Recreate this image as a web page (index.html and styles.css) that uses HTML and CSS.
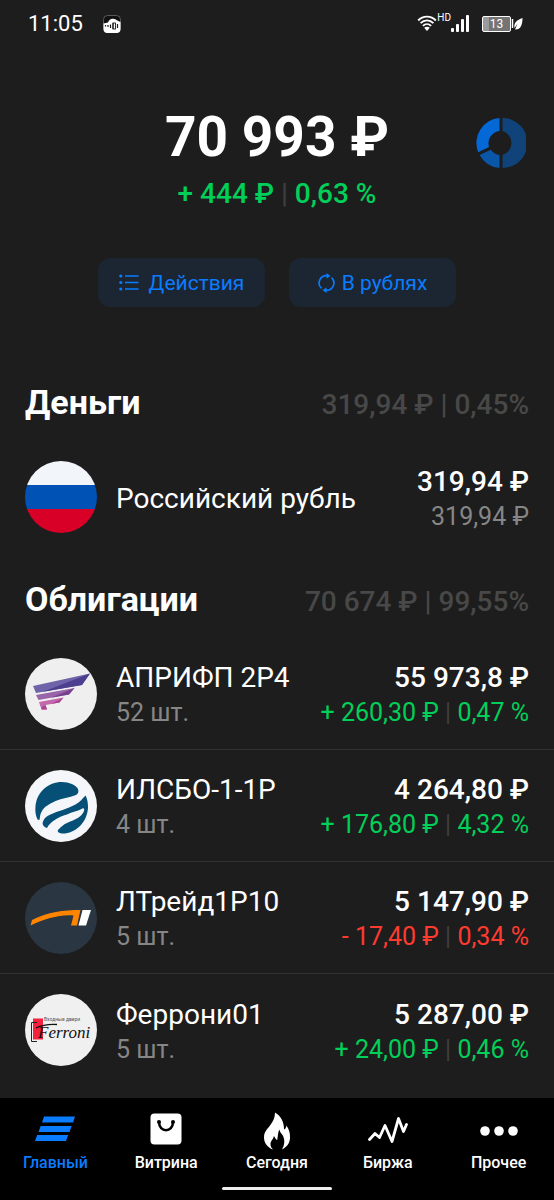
FILE: index.html
```html
<!DOCTYPE html>
<html lang="ru">
<head>
  <meta charset="UTF-8" />
  <meta name="viewport" content="width=device-width, initial-scale=1.0"/>
  <title>Портфель</title>
  <link rel="stylesheet" href="styles.css">
</head>
<body>
  <div class="status-bar">
    <span class="time">11:05</span>
    <svg class="icon-app" width="18" height="18" viewBox="0 0 18 18">
      <rect x="0.5" y="0.5" width="17" height="17" rx="4" fill="#111" stroke="#777" stroke-width="0.7"/>
      <path d="M0.5 8.5L5 7.5C6 4 9 3 11 4C13 4 14 6 17.5 7V14a4 4 0 0 1-4 4H4.500a4 4 0 0 1-4-4z" fill="#fff"/>
      <path d="M2.500 10v1.500M5 10v2M7.500 9.500v3.500M10 8v6M14.500 9v4" stroke="#1d1d1d" stroke-width="1.200"/>
      <rect x="10" y="8" width="2.500" height="6" fill="none" stroke="#1d1d1d" stroke-width="0.900"/>
    </svg>
    <div class="status-right">
      <svg width="20" height="17" viewBox="0 0 20 17">
        <g fill="none" stroke="#fff" stroke-width="1.900">
          <path d="M1.200 5.500C6 0.300 14 0.300 18.800 5.500"/>
          <path d="M3.600 8.200C7.200 4.400 12.800 4.400 16.400 8.200"/>
          <path d="M5.900 10.900C8.300 8.500 11.700 8.500 14.100 10.900"/>
        </g>
        <path d="M7.200 12.800C8.800 11.300 11.200 11.300 12.800 12.800L10 16z" fill="#fff"/>
      </svg>
      <span class="hd">HD</span>
      <svg width="19" height="17" viewBox="0 0 19 17" fill="#fff">
        <rect x="0" y="13" width="3" height="4" rx="1"/>
        <rect x="5" y="9" width="3" height="8" rx="1"/>
        <rect x="10" y="4" width="3" height="13" rx="1"/>
        <rect x="15" y="0" width="3" height="17" rx="1"/>
      </svg>
      <div class="battery">13</div>
      <svg width="12" height="14" viewBox="0 0 12 14">
        <path d="M1.500 2v9" stroke="#fff" stroke-width="1.500"/>
        <path d="M11.500 1C6 3 2.500 5.500 3.500 11L6.500 6.500L4 12.500C9.500 13 11.500 8 11.500 1z" fill="#fff"/>
      </svg>
    </div>
  </div>

  <main>
    <section class="summary">
      <div class="balance-row">
        <h1 class="balance">70 993 ₽</h1>
        <button class="chart-btn" aria-label="Аналитика">
          <svg width="50" height="50" viewBox="0 0 50 50">
            <path d="M26.500 0A25 25 0 0 1 26.500 50V37A12.500 12.500 0 0 0 26.500 13z" fill="#0f4379"/>
            <path d="M23.500 0A25 25 0 0 0 2.200 34.200L13 29A12.500 12.500 0 0 1 23.500 13z" fill="#0468d7"/>
            <path d="M3.600 37A25 25 0 0 0 23.500 50V37A12.500 12.500 0 0 1 14.800 31.800z" fill="#0a56a8"/>
          </svg>
        </button>
      </div>
      <div class="profit up">+ 444 ₽ <span class="sep">|</span> 0,63 %</div>
      <div class="actions">
        <button class="action">
          <svg width="20" height="17" viewBox="0 0 20 17">
            <path d="M6 2h13.500M6 8.500h13.500M6 15h13.500" stroke="#0a7cff" stroke-width="1.500"/>
            <circle cx="1.800" cy="2" r="1.600" fill="#0a7cff"/>
            <circle cx="1.800" cy="8.500" r="1.600" fill="#0a7cff"/>
            <circle cx="1.800" cy="15" r="1.600" fill="#0a7cff"/>
          </svg>
          Действия
        </button>
        <button class="action currency">
          <svg width="17" height="20" viewBox="0 0 17 20">
            <g fill="none" stroke="#0a7cff" stroke-width="1.600">
              <path d="M3.500 15.300A7.300 7.300 0 0 1 9.500 2.700"/>
              <path d="M13.500 4.700A7.300 7.300 0 0 1 7.500 17.300"/>
            </g>
            <path d="M8.500 0L12.500 3L8.500 5.500zM8.500 20L4.500 17L8.500 14.500z" fill="#0a7cff"/>
          </svg>
          В рублях
        </button>
      </div>
    </section>

    <section class="group">
      <div class="group-head">
        <h2>Деньги</h2>
        <span class="group-total">319,94 ₽ | 0,45%</span>
      </div>
      <div class="row">
        <svg class="logo" viewBox="0 0 72 72">
          <clipPath id="flag"><circle cx="36" cy="36" r="36"/></clipPath>
          <g clip-path="url(#flag)">
            <rect width="72" height="24" fill="#f2f5f9"/>
            <rect y="24" width="72" height="24" fill="#0052b4"/>
            <rect y="48" width="72" height="24" fill="#d80027"/>
          </g>
        </svg>
        <div class="info">
          <div class="name">Российский рубль</div>
        </div>
        <div class="value">
          <div class="price">319,94 ₽</div>
          <div class="sub">319,94 ₽</div>
        </div>
      </div>
    </section>

    <section class="group">
      <div class="group-head">
        <h2>Облигации</h2>
        <span class="group-total">70 674 ₽ | 99,55%</span>
      </div>
      <div class="row">
        <svg class="logo" viewBox="0 0 72 72">
          <circle cx="36" cy="36" r="36" fill="#efefef"/>
          <path d="M8 28L65 15.500L57 27L11 35z" fill="#6f63aa"/>
          <path d="M65 15.500L29 29.500L17 34L57 27z" fill="#4c3f8f"/>
          <path d="M11 37L49.500 30L44 36.500L13.500 42z" fill="#9a64a9"/>
          <path d="M49.500 30L26 39.800L44 36.500z" fill="#76408e"/>
          <path d="M14 44L38.500 39.500L34.500 44.500L20.500 47L22 51.500H16.500z" fill="#c368ab"/>
          <path d="M38.500 39.500L26 46L34.500 44.500zM20.500 47L17 49L16.500 51.500H22z" fill="#a94691"/>
        </svg>
        <div class="info">
          <div class="name">АПРИФП 2Р4</div>
          <div class="sub">52 шт.</div>
        </div>
        <div class="value">
          <div class="price">55 973,8 ₽</div>
          <div class="sub up">+ 260,30 ₽ <span class="sep">|</span> 0,47 %</div>
        </div>
      </div>
      <div class="row">
        <svg class="logo" viewBox="0 0 72 72">
          <circle cx="36" cy="36" r="36" fill="#f4f6f9"/>
          <path d="M12.500 49.500C10.500 45 10 41 10.500 36C12 22 23 12 37 12C44 12 51 15 53 19C54 22 53 24 51 25C44 28 37 28 30.500 31C24 34 19 37 17 41C15 44 15 47 14.500 50z" fill="#065078"/>
          <path d="M60.500 25.500C62.500 29 63 33 63 38C62 53 50 64 37 63.500C33 63 31.500 61 34 59C36 57 39 54 42 53C49 50 57 47 59 41C59.500 39 59 38 57.500 38.500C53 41 47 42 42 44.500C33 47 25 52 22 58C18 56.500 17 54 18 51.500C19 48 22 46 25.500 44.500C33 41 42 39 50.500 34.500C55 32 57 29 60.500 25.500z" fill="#065078"/>
        </svg>
        <div class="info">
          <div class="name">ИЛСБО-1-1Р</div>
          <div class="sub">4 шт.</div>
        </div>
        <div class="value">
          <div class="price">4 264,80 ₽</div>
          <div class="sub up">+ 176,80 ₽ <span class="sep">|</span> 4,32 %</div>
        </div>
      </div>
      <div class="row">
        <svg class="logo" viewBox="0 0 72 72">
          <circle cx="36" cy="36" r="36" fill="#2a3642"/>
          <path d="M7 38C23 30 38 28 55.500 28L52 43.500H46L48.500 33.500C34 32.500 20 37 5.500 43.500z" fill="#ff8400"/>
          <path d="M57.500 28H66L61 43.500H53.500z" fill="#fff"/>
        </svg>
        <div class="info">
          <div class="name">ЛТрейд1Р10</div>
          <div class="sub">5 шт.</div>
        </div>
        <div class="value">
          <div class="price">5 147,90 ₽</div>
          <div class="sub down">- 17,40 ₽ <span class="sep">|</span> 0,34 %</div>
        </div>
      </div>
      <div class="row">
        <svg class="logo" viewBox="0 0 72 72">
          <circle cx="36" cy="36" r="36" fill="#f0f0f0"/>
          <rect x="8" y="24.500" width="10" height="21" fill="#f4213f"/>
          <path d="M12 28.500H6.500V47.500H12" fill="none" stroke="#222" stroke-width="1"/>
          <text class="ferroni-top" x="19" y="27">Входные двери</text>
          <text class="ferroni" x="13" y="44">Ferroni</text>
          <path d="M11 34C17 31 24 30 32 30.500" fill="none" stroke="#111" stroke-width="1.300"/>
        </svg>
        <div class="info">
          <div class="name">Феррони01</div>
          <div class="sub">5 шт.</div>
        </div>
        <div class="value">
          <div class="price">5 287,00 ₽</div>
          <div class="sub up">+ 24,00 ₽ <span class="sep">|</span> 0,46 %</div>
        </div>
      </div>
    </section>
  </main>

  <nav class="tab-bar">
    <div class="tabs">
      <a href="#" class="tab active">
        <svg width="40" height="36" viewBox="0 0 40 36" fill="#0a7cff">
          <path d="M9 5.500H40L38 11.500H7zM5.700 15H36.700L34.500 21H3.500zM2.200 24H33.200L31 30H0z"/>
        </svg>
        Главный
      </a>
      <a href="#" class="tab">
        <svg width="32" height="36" viewBox="0 0 32 36">
          <rect x="0.500" y="2.500" width="31" height="31" rx="4" fill="#fff"/>
          <path d="M9 11C9 22 23 22 23 11" fill="none" stroke="#000" stroke-width="2.500"/>
          <circle cx="9" cy="11" r="2" fill="#000"/>
          <circle cx="23" cy="11" r="2" fill="#000"/>
        </svg>
        Витрина
      </a>
      <a href="#" class="tab">
        <svg class="flame" width="26" height="36" viewBox="0 0 26 36">
          <path d="M11 1.500C17 5 20 11 20 18.500C21.500 18 22.300 16.500 22.300 14.500C25 18 26.300 22 26 27C25.800 32 23 36 18 38.500C20.500 34 21 30 19.500 26C18.500 23 16 22 15.300 18.500C13.800 22 14 25 13.200 29C11.500 28.500 11.500 26.500 9.800 25C9.800 28 6.500 29.500 6.500 33C6.500 35.500 7.500 37 9 38.500C3.500 36.500 0 32 0 26.500C0 21 3 18.500 6 14.500C9 10.500 11 7 11 1.500z" fill="#fff"/>
        </svg>
        Сегодня
      </a>
      <a href="#" class="tab">
        <svg width="40" height="36" viewBox="0 0 40 36">
          <path d="M1.500 28.500L7 22.500L11.500 26.500L17 14.500L24 30.500L30.500 7.500L35.500 20.500L38.500 13.500" fill="none" stroke="#fff" stroke-width="2.800" stroke-linecap="round" stroke-linejoin="round"/>
        </svg>
        Биржа
      </a>
      <a href="#" class="tab">
        <svg width="38" height="36" viewBox="0 0 38 36" fill="#fff">
          <circle cx="5" cy="20" r="4.800"/>
          <circle cx="19" cy="20" r="4.800"/>
          <circle cx="33" cy="20" r="4.800"/>
        </svg>
        Прочее
      </a>
    </div>
    <div class="home-line"></div>
  </nav>
</body>
</html>
```

FILE: styles.css
```css
* {
  box-sizing: border-box;
}

body {
  margin: 0;
  min-height: 100vh;
  display: flex;
  flex-direction: column;
  font-family: Roboto, "Noto Sans", sans-serif;
  background: #1d1d1d;
  color: white;
}

h1, h2 {
  margin: 0;
}

button {
  border: none;
  background: none;
  padding: 0;
  font-family: inherit;
  cursor: pointer;
}

svg {
  display: block;
  flex-shrink: 0;
}

.status-bar {
  display: flex;
  align-items: center;
  height: 47px;
  padding: 0 31px 0 28px;
}

.time {
  font-size: 22px;
}

.icon-app {
  margin-left: 20px;
}

.status-right {
  display: flex;
  align-items: center;
  margin-left: auto;
}

.hd {
  align-self: flex-start;
  margin-top: -3px;
  font-size: 10px;
  line-height: 12px;
}

.battery {
  width: 29px;
  height: 16px;
  margin-left: 12px;
  border: 1px solid white;
  border-radius: 2px;
  background: linear-gradient(to right, #9b9b9b 6px, #747474 6px);
  font-size: 12px;
  line-height: 15px;
  text-align: center;
}

.summary {
  padding-top: 59px;
}

.balance-row {
  display: grid;
  grid-template-columns: 1fr auto 1fr;
  align-items: end;
  padding: 0 28px;
}

.balance {
  grid-column: 2;
  font-size: 55px;
  line-height: 62px;
  font-weight: 700;
}

.chart-btn {
  justify-self: end;
}

.profit {
  margin-top: 10px;
  font-size: 28px;
  line-height: 32px;
  font-weight: 500;
  text-align: center;
}

.up {
  color: #00d05a;
}

.down {
  color: #ff3b30;
}

.sep {
  color: #3f3f3f;
}

.actions {
  display: flex;
  justify-content: center;
  gap: 24px;
  margin-top: 48px;
}

.action {
  display: flex;
  align-items: center;
  justify-content: center;
  gap: 10px;
  width: 167px;
  height: 49px;
  border-radius: 12px;
  background-color: #1b2632;
  color: #0a7cff;
  font-size: 21px;
}

.currency {
  gap: 7px;
}

.group-head {
  display: flex;
  align-items: baseline;
  justify-content: space-between;
  padding: 0 25px;
  line-height: 40px;
}

.group h2 {
  font-size: 34px;
  font-weight: 700;
}

.group-total {
  color: #484848;
  font-size: 28px;
  font-weight: 500;
}

.summary + .group {
  margin-top: 75px;
}

.group + .group {
  margin-top: 26px;
}

.row {
  display: flex;
  align-items: center;
  height: 112px;
  padding: 0 25px;
  border-bottom: 1px solid #313131;
}

.group-head + .row {
  margin-top: 16px;
}

.row:last-child {
  border-bottom: none;
}

.logo {
  width: 72px;
  height: 72px;
  margin-right: 19px;
}

.ferroni {
  font-family: "Liberation Serif", serif;
  font-size: 17px;
  font-style: italic;
  fill: #111;
}

.ferroni-top {
  font-size: 5px;
  fill: #555;
}

.info,
.value {
  padding-top: 3px;
}

.name {
  font-size: 28px;
  line-height: 36px;
}

.value {
  margin-left: auto;
  text-align: right;
  white-space: nowrap;
}

.price {
  font-size: 28px;
  line-height: 36px;
  font-weight: 500;
}

.sub {
  font-size: 25px;
  line-height: 34px;
}

.sub:not(.up):not(.down) {
  color: #868686;
}

.tab-bar {
  position: sticky;
  bottom: 0;
  margin-top: auto;
  height: 102px;
  padding-top: 13px;
  background: black;
}

.tabs {
  display: grid;
  grid-template-columns: repeat(5, 1fr);
}

.tab {
  display: flex;
  flex-direction: column;
  align-items: center;
  gap: 6px;
  color: white;
  font-size: 16px;
  line-height: 20px;
  font-weight: 500;
  text-decoration: none;
}

.active {
  color: #0a7cff;
}

.flame {
  overflow: visible;
}

.home-line {
  width: 110px;
  height: 3px;
  margin: 14px auto 0;
  border-radius: 2px;
  background: #eee;
}
```
